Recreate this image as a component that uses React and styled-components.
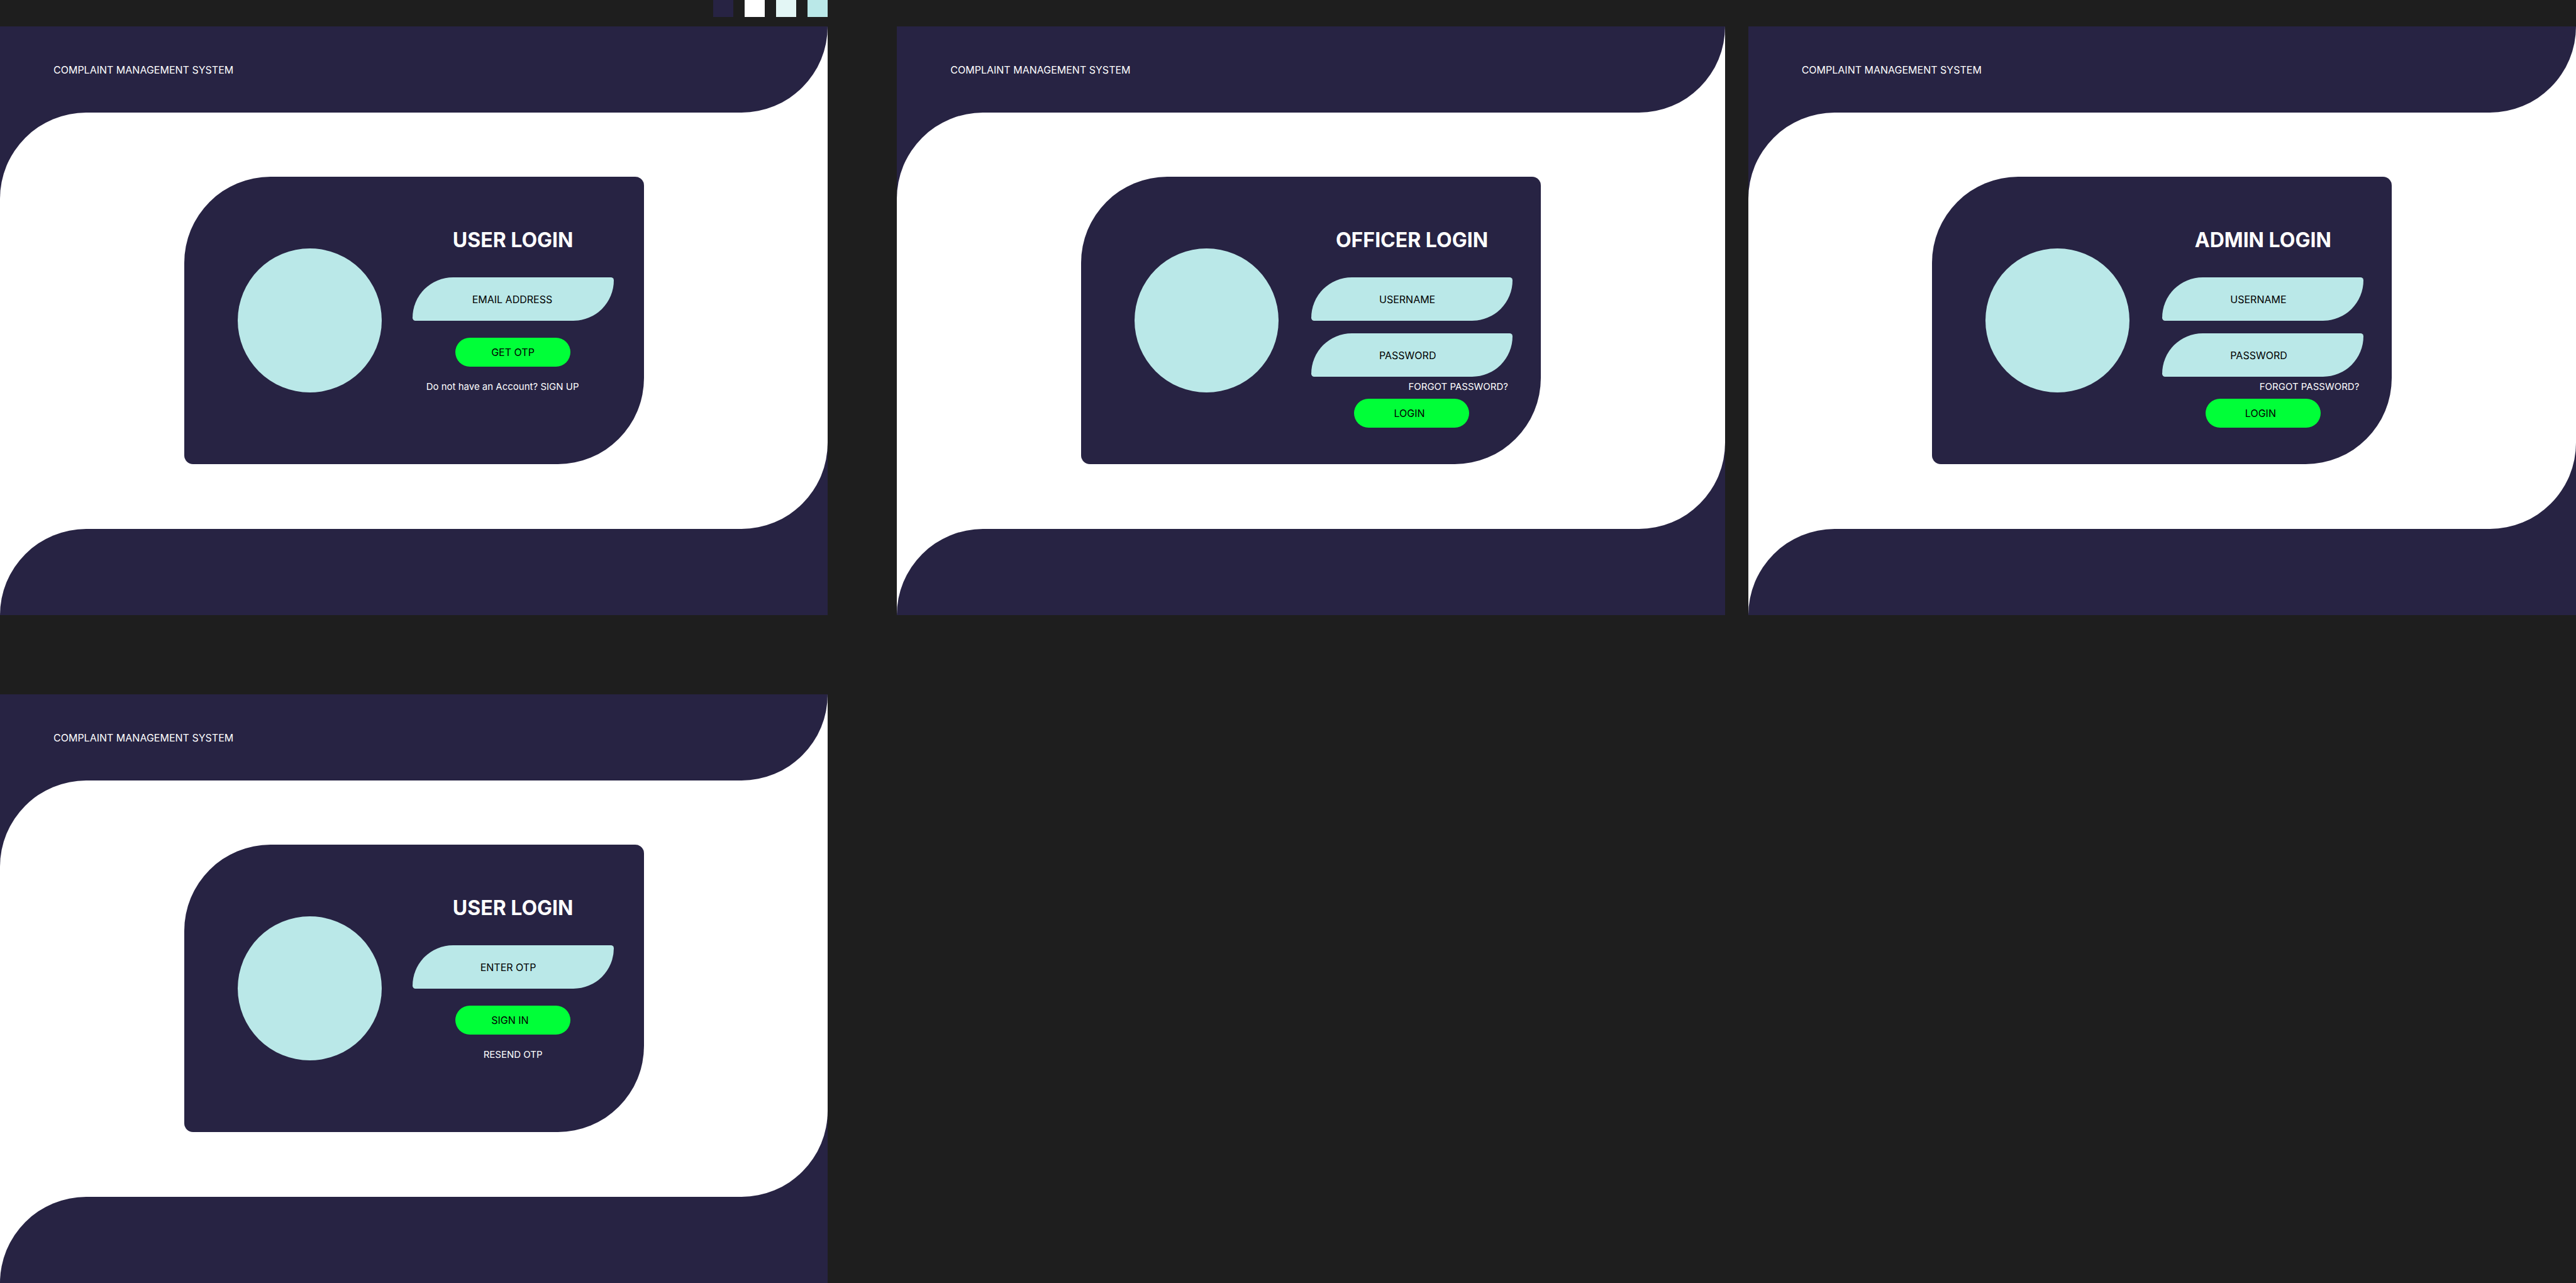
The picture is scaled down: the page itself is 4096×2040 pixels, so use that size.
import React from "react";
import styled, { createGlobalStyle, ThemeProvider } from "styled-components";

const theme = {
  canvas: "#1e1e1e",
  navy: "#272343",
  white: "#ffffff",
  ice: "#e3f6f5",
  mint: "#bae8e8",
  green: "#00ff38",
};

const GlobalStyle = createGlobalStyle`
  *, *::before, *::after { box-sizing: border-box; }
  body {
    margin: 0;
    background: ${theme.canvas};
    font-family: Inter, "Liberation Sans", sans-serif;
    font-size: 16px;
  }
`;

const Board = styled.main`
  display: flex;
  gap: 37px;
  min-height: 100vh;
`;

const Column = styled.div`
  flex: 1 1 0;
  min-width: 0;
  display: flex;
  flex-direction: column;
  gap: 126px;
  padding-top: ${(p) => (p.$palette ? 0 : 42)}px;
  margin-right: ${(p) => (p.$palette ? 73 : 0)}px;
`;

const Group = styled.div`
  display: flex;
  flex-direction: column;
  gap: 15px;
`;

const Palette = styled.div`
  display: flex;
  justify-content: flex-end;
  gap: 18px;
`;

const Swatch = styled.span`
  width: 32px;
  height: 27px;
  background: ${(p) => p.theme[p.$tone]};
`;

const Screen = styled.section`
  display: flex;
  flex-direction: column;
`;

/* Each band shows its own backdrop behind the rounded corners of its surface. */
const Band = styled.div`
  background: ${(p) => p.theme[p.$backdrop]};
`;

const Header = styled.header`
  display: flex;
  align-items: center;
  height: 137px;
  padding: 0 85px;
  color: ${(p) => p.theme.white};
  background: ${(p) => p.theme.navy};
  border-bottom-right-radius: 137px;
`;

const Content = styled.div`
  display: flex;
  justify-content: center;
  padding: 102px 0 103px;
  background: ${(p) => p.theme.white};
  border-radius: 137px 0;
`;

const Footer = styled.footer`
  height: 137px;
  background: ${(p) => p.theme.navy};
  border-top-left-radius: 137px;
`;

const Card = styled.div`
  display: flex;
  align-items: center;
  gap: ${(p) => (p.$wide ? 52 : 49)}px;
  width: 100%;
  max-width: 731px;
  min-height: 457px;
  padding-left: 85px;
  background: ${(p) => p.theme.navy};
  border-radius: 137px 14px;
`;

const Avatar = styled.div`
  flex: none;
  width: 229px;
  height: 229px;
  border-radius: 50%;
  background: ${(p) => p.theme.mint};
`;

const Form = styled.form`
  align-self: stretch;
  display: flex;
  flex-direction: column;
  align-items: center;
  width: 320px;
  padding-top: 81px;
`;

const Title = styled.h1`
  margin: 0 0 39px;
  color: ${(p) => p.theme.white};
  font-size: 32px;
  line-height: 40px;
  font-weight: 700;
`;

const Fields = styled.div`
  display: flex;
  flex-direction: column;
  gap: 20px;
  width: 100%;
`;

const Field = styled.input`
  width: 100%;
  height: 69px;
  padding: 0 0 0 ${(p) => p.$inset}px;
  border: 0;
  border-radius: 69px 5px;
  background: ${(p) => p.theme.mint};
  color: #000;
  font: inherit;

  &::placeholder {
    color: #000;
    opacity: 1;
  }
`;

const Submit = styled.button`
  width: 183px;
  height: 46px;
  margin-top: ${(p) => p.$gap}px;
  padding: 0 0 0 ${(p) => p.$inset}px;
  border: 0;
  border-radius: 23px;
  background: ${(p) => p.theme.green};
  color: #000;
  font: inherit;
  text-align: left;
  cursor: pointer;
`;

const Note = styled.p`
  align-self: ${(p) => p.$align};
  margin: ${(p) => p.$gap}px 0 0;
  padding: 0 7px 0 ${(p) => (p.$align === "flex-start" ? 22 : 7)}px;
  color: ${(p) => p.theme.white};
  font-size: 15px;
  line-height: 18px;
`;

const Link = styled.a`
  color: inherit;
  text-decoration: none;
`;

function LoginScreen({ title, wide, children }) {
  return (
    <Screen>
      <Band $backdrop="white">
        <Header>COMPLAINT MANAGEMENT SYSTEM</Header>
      </Band>
      <Band $backdrop="navy">
        <Content>
          <Card $wide={wide}>
            <Avatar />
            <Form onSubmit={(e) => e.preventDefault()}>
              <Title>{title}</Title>
              {children}
            </Form>
          </Card>
        </Content>
      </Band>
      <Band $backdrop="white">
        <Footer />
      </Band>
    </Screen>
  );
}

function PasswordLogin({ title }) {
  return (
    <LoginScreen title={title} wide>
      <Fields>
        <Field type="text" placeholder="USERNAME" aria-label="USERNAME" $inset={108} />
        <Field type="password" placeholder="PASSWORD" aria-label="PASSWORD" $inset={108} />
      </Fields>
      <Note $align="flex-end" $gap={7}>
        <Link href="#forgot">FORGOT PASSWORD?</Link>
      </Note>
      <Submit type="submit" $gap={10} $inset={63}>LOGIN</Submit>
    </LoginScreen>
  );
}

export default function App() {
  return (
    <ThemeProvider theme={theme}>
      <GlobalStyle />
      <Board>
        <Column $palette>
          <Group>
            <Palette>
              {["navy", "white", "ice", "mint"].map((tone) => (
                <Swatch key={tone} $tone={tone} />
              ))}
            </Palette>
            <LoginScreen title="USER LOGIN">
              <Fields>
                <Field type="email" placeholder="EMAIL ADDRESS" aria-label="EMAIL ADDRESS" $inset={95} />
              </Fields>
              <Submit type="submit" $gap={27} $inset={57}>GET OTP</Submit>
              <Note $align="flex-start" $gap={23}>
                Do not have an Account? <Link href="#signup">SIGN UP</Link>
              </Note>
            </LoginScreen>
          </Group>
          <LoginScreen title="USER LOGIN">
            <Fields>
              <Field type="text" placeholder="ENTER OTP" aria-label="ENTER OTP" $inset={108} />
            </Fields>
            <Submit type="submit" $gap={27} $inset={57}>SIGN IN</Submit>
            <Note $align="center" $gap={23}>
              <Link href="#resend">RESEND OTP</Link>
            </Note>
          </LoginScreen>
        </Column>
        <Column>
          <PasswordLogin title="OFFICER LOGIN" />
        </Column>
        <Column>
          <PasswordLogin title="ADMIN LOGIN" />
        </Column>
      </Board>
    </ThemeProvider>
  );
}
